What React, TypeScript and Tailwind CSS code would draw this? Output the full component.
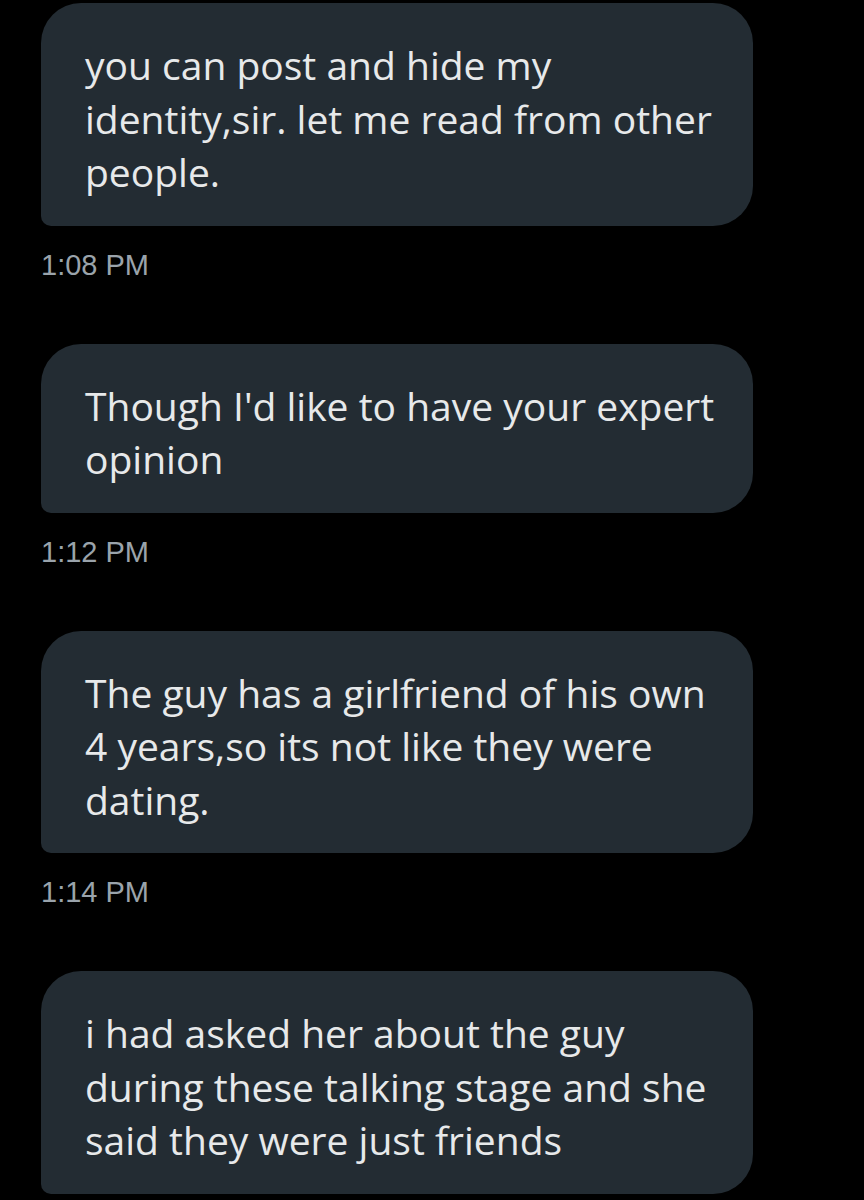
import React from "react";

const messages = [
  { text: "you can post and hide my identity,sir. let me read from other people.", time: "1:08 PM" },
  { text: "Though I'd like to have your expert opinion", time: "1:12 PM" },
  { text: "The guy has a girlfriend of his own 4 years,so its not like they were dating.", time: "1:14 PM" },
  { text: "i had asked her about the guy during these talking stage and she said they were just friends", time: "" },
];

export default function App() {
  return (
    <div className="w-[864px] h-[1200px] bg-black overflow-hidden pt-[3px] pl-[41px]">
      {messages.map((m, i) => (
        <div key={i} className="flex flex-col items-start">
          <div
            className="w-[712px] bg-[#232c33] rounded-[40px] rounded-bl-[10px] pl-[44px] pr-[24px] pt-[35px] pb-[27px] text-[#e7e9ea] text-[39px] leading-[53.5px]"
            style={{ fontFamily: '"Open Sans", "Noto Sans", sans-serif' }}
          >
            {m.text}
          </div>
          {m.time && (
            <div
              className="mt-[24px] mb-[64px] text-[29px] leading-[30px] text-[#9aa3ab]"
              style={{ fontFamily: '"Liberation Sans", Arial, sans-serif' }}
            >
              {m.time}
            </div>
          )}
        </div>
      ))}
    </div>
  );
}
